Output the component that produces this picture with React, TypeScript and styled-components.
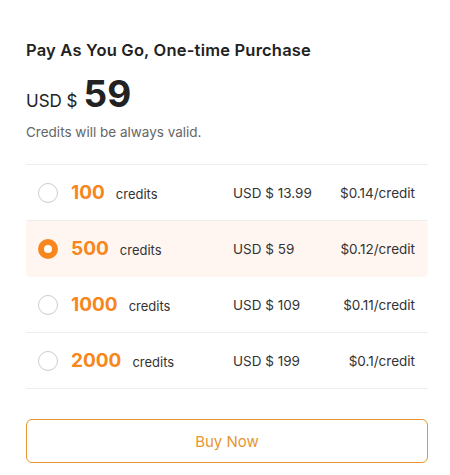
import React, { useState } from "react";
import styled, { createGlobalStyle } from "styled-components";

interface IPlan {
  credits: number;
  price: string;
  perCredit: string;
}

const plans: Array<IPlan> = [
  { credits: 100, price: "USD $ 13.99", perCredit: "$0.14/credit" },
  { credits: 500, price: "USD $ 59", perCredit: "$0.12/credit" },
  { credits: 1000, price: "USD $ 109", perCredit: "$0.11/credit" },
  { credits: 2000, price: "USD $ 199", perCredit: "$0.1/credit" },
];

const GlobalStyle = createGlobalStyle`
  body {
    margin: 0;
    background: #ffffff;
    font-family: Inter, "Noto Sans", sans-serif;
    color: #222222;
  }
`;

const Wrapper = styled.div`
  padding: 40px 22px 0 26px;
`;

const Title = styled.h2`
  margin: 0;
  font-size: 16.5px;
  font-weight: 600;
  line-height: 20px;
  letter-spacing: 0.2px;
  color: #222222;
`;

const PriceLine = styled.div`
  display: flex;
  align-items: baseline;
  gap: 6px;
  margin-top: 12px;
`;

const Currency = styled.span`
  font-size: 17px;
  color: #222222;
`;

const Amount = styled.span`
  font-size: 37px;
  font-weight: 700;
  line-height: 44px;
  color: #222222;
`;

const Note = styled.p`
  margin: 8px 0 0;
  font-size: 13.5px;
  color: #666666;
`;

const PlanList = styled.div`
  margin-top: 24px;
  border-top: 1px solid #eeeeee;
`;

const PlanRow = styled.div<{ $selected: boolean }>`
  display: flex;
  align-items: center;
  height: 55px;
  padding: 0 13px 0 12px;
  border-bottom: 1px solid ${(p) => (p.$selected ? "transparent" : "#eeeeee")};
  background: ${(p) => (p.$selected ? "#fff6f1" : "transparent")};
  border-radius: ${(p) => (p.$selected ? "4px" : "0")};
  cursor: pointer;
`;

const Radio = styled.span<{ $selected: boolean }>`
  box-sizing: border-box;
  width: 20px;
  height: 20px;
  border-radius: 50%;
  border: ${(p) => (p.$selected ? "6px solid #f7861c" : "1px solid #cccccc")};
  background: #ffffff;
  flex-shrink: 0;
`;

const CreditGroup = styled.div`
  flex: 1;
  display: flex;
  align-items: baseline;
  gap: 11px;
  margin-left: 13px;
`;

const CreditCount = styled.span`
  font-size: 19px;
  font-weight: 700;
  color: #f7861c;
`;

const CreditLabel = styled.span`
  font-size: 13px;
  color: #333333;
`;

const Price = styled.span`
  width: 106px;
  font-size: 13.5px;
  color: #333333;
`;

const PerCredit = styled.span`
  width: 76px;
  text-align: right;
  font-size: 13.5px;
  color: #333333;
`;

const BuyButton = styled.button`
  display: block;
  width: 100%;
  height: 44px;
  margin-top: 30px;
  border: 1px solid #e8952f;
  border-radius: 6px;
  background: #ffffff;
  color: #e8952f;
  font-family: Inter, "Noto Sans", sans-serif;
  font-size: 15px;
  cursor: pointer;
`;

function App() {
  const [selected, setSelected] = useState<number>(500);

  return (
    <>
      <GlobalStyle />
      <Wrapper>
        <Title>Pay As You Go, One-time Purchase</Title>
        <PriceLine>
          <Currency>USD $</Currency>
          <Amount>59</Amount>
        </PriceLine>
        <Note>Credits will be always valid.</Note>

        <PlanList>
          {plans.map((plan) => {
            const isSelected = plan.credits === selected;
            return (
              <PlanRow
                key={plan.credits}
                $selected={isSelected}
                onClick={() => setSelected(plan.credits)}
              >
                <Radio $selected={isSelected} />
                <CreditGroup>
                  <CreditCount>{plan.credits}</CreditCount>
                  <CreditLabel>credits</CreditLabel>
                </CreditGroup>
                <Price>{plan.price}</Price>
                <PerCredit>{plan.perCredit}</PerCredit>
              </PlanRow>
            );
          })}
        </PlanList>

        <BuyButton>Buy Now</BuyButton>
      </Wrapper>
    </>
  );
}

export default App;
